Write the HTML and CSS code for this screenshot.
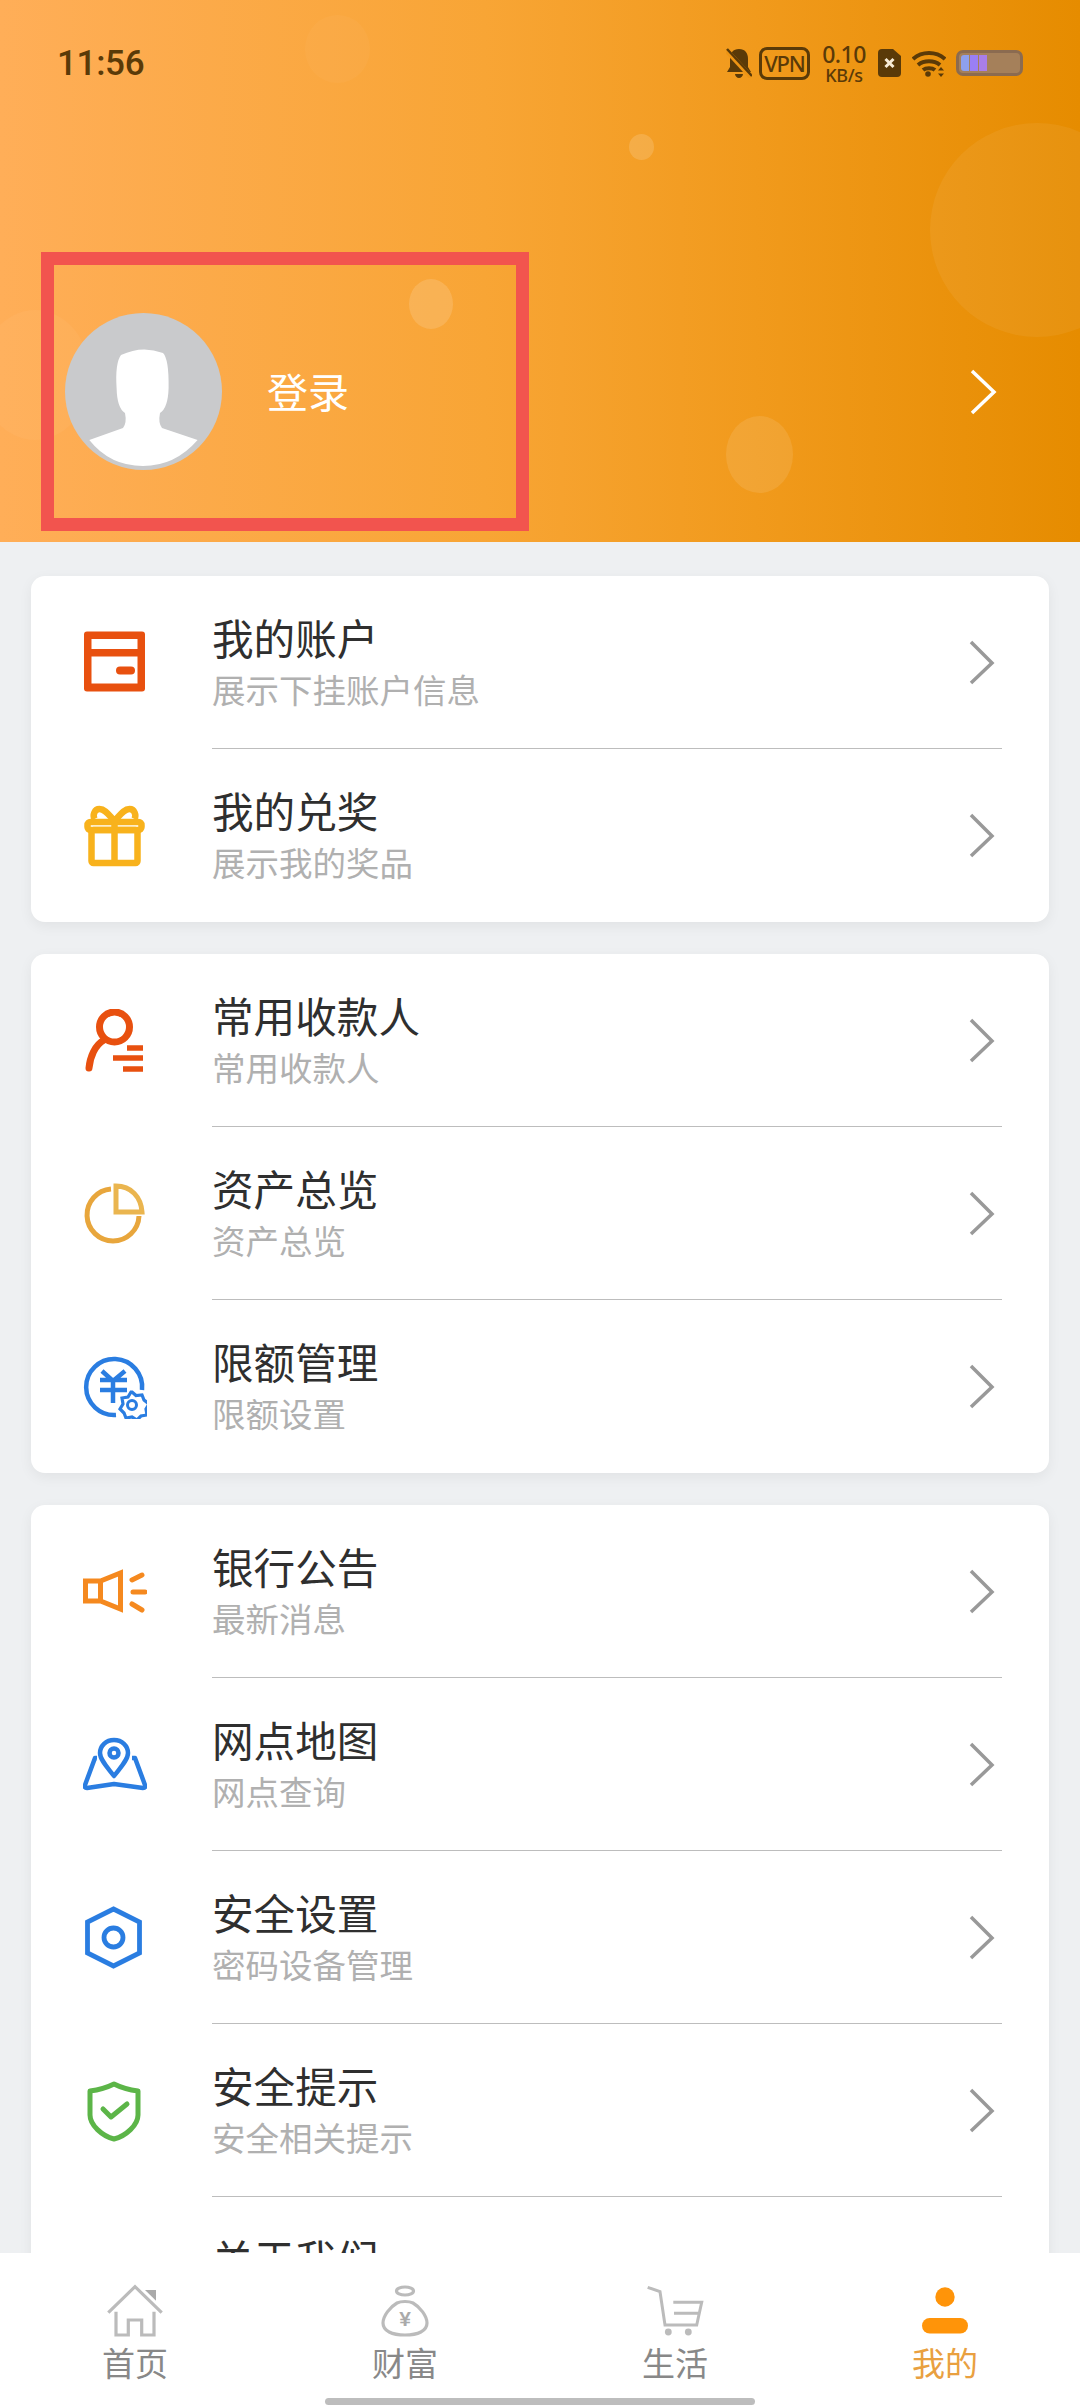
FILE: index.html
```html
<!DOCTYPE html>
<html lang="zh-CN">
<head>
<meta charset="utf-8">
<title>我的</title>
<link rel="stylesheet" href="styles.css">
</head>
<body>
<div class="app">
  <header class="hero">
    <span class="bubble b1"></span><span class="bubble b2"></span><span class="bubble b3"></span>
    <span class="bubble b4"></span><span class="bubble b5"></span><span class="bubble b6"></span>
    <div class="status">
      <span class="time">11:56</span>
      <div class="status-icons">
        <svg class="s-bell" viewBox="0 0 26 30"><path d="M13 1c6 0 9 4 9 10v8l3 5H1l3-5v-8C4 5 7 1 13 1zM9 26h8c0 2-2 4-4 4s-4-2-4-4z" fill="#5a3a08"/><path d="M1 3l24 26" stroke="#ee9514" stroke-width="5"/><path d="M1 1l25 27" stroke="#5a3a08" stroke-width="2.5"/></svg>
        <span class="vpn">VPN</span>
        <span class="speed"><b>0.10</b><i>KB/s</i></span>
        <svg class="s-sim" viewBox="0 0 23 28"><path d="M4 0h11l8 7v17a4 4 0 0 1-4 4H4a4 4 0 0 1-4-4V4a4 4 0 0 1 4-4z" fill="#5a3a08"/><path d="M7.500 10l8 8M15.500 10l-8 8" stroke="#f8ecd6" stroke-width="3"/></svg>
        <svg class="s-wifi" viewBox="0 0 34 27" fill="none" stroke="#5a3a08" stroke-width="4"><path d="M1 9c9-8 23-8 32 0M6 15c6-5 16-5 22 0M11 20c3-2.500 9-2.500 12 0"/><circle cx="16" cy="24" r="2.800" fill="#5a3a08" stroke="none"/><path d="M29 17l3 3.500h-6zM29 27l3-3.500h-6z" fill="#5a3a08" stroke="none"/></svg>
        <span class="battery"><i class="cell c1"></i><i class="cell c2"></i><i class="cell c3"></i></span>
      </div>
    </div>
    <div class="profile">
      <svg class="avatar" viewBox="0 0 157 157"><circle cx="78.500" cy="78.500" r="78.500" fill="#c9cacc"/><path d="M24.300 127L58 115Q62 110 60 100Q52 95 51.600 75Q50 50 56 42Q77 32 98 40Q104 46 103.600 75Q103 95 95 100Q93 110 97 115L132.600 127Q110 153 78 153Q45 153 24.300 127Z" fill="#fff"/></svg>
      <span class="login">登录</span>
      <svg class="hero-chev" viewBox="0 0 27 46"><path d="M2 2l22 21L2 44" fill="none" stroke="#fff" stroke-width="3.500"/></svg>
    </div>
    <div class="mark"></div>
  </header>

  <main class="content">
    <section class="card">
      <a class="row">
        <svg class="ico" viewBox="83 630 64 64"><rect x="84" y="630.500" width="61" height="60" rx="3" fill="#e8500f"/><rect x="91.500" y="638" width="46" height="10" fill="#fff"/><rect x="91.500" y="655.500" width="46" height="27" fill="#fff"/><rect x="116" y="665.500" width="19" height="8" rx="4" fill="#e8500f"/></svg>
        <div class="txt"><h3>我的账户</h3><p>展示下挂账户信息</p></div>
        <svg class="chev" viewBox="0 0 26 46"><path d="M2 2l21 21L2 43" fill="none" stroke="#999" stroke-width="3.500"/></svg>
      </a>
      <a class="row">
        <svg class="ico" viewBox="83 803 64 64" fill="none" stroke="#f8b21c" stroke-width="6.500" stroke-linejoin="round"><rect x="87.500" y="821" width="54" height="8" rx="3"/><rect x="91.500" y="829" width="46" height="33" rx="2"/><path d="M114.500 820v42M114.500 820c-5-5-9-12-15-12-5 0-7 6-5 10M114.500 820c5-5 9-12 15-12 5 0 7 6 5 10"/></svg>
        <div class="txt"><h3>我的兑奖</h3><p>展示我的奖品</p></div>
        <svg class="chev" viewBox="0 0 26 46"><path d="M2 2l21 21L2 43" fill="none" stroke="#999" stroke-width="3.500"/></svg>
      </a>
    </section>

    <section class="card">
      <a class="row">
        <svg class="ico" viewBox="83 1008 64 64" fill="none" stroke="#e8500f" stroke-width="7" stroke-linecap="round"><circle cx="114.500" cy="1026" r="15"/><path d="M104 1039c-9 5-14 17-15 28"/><path d="M127 1047h16M113 1057h30M123 1068h20" stroke-linecap="butt" stroke-width="5.500"/></svg>
        <div class="txt"><h3>常用收款人</h3><p>常用收款人</p></div>
        <svg class="chev" viewBox="0 0 26 46"><path d="M2 2l21 21L2 43" fill="none" stroke="#999" stroke-width="3.500"/></svg>
      </a>
      <a class="row">
        <svg class="ico" viewBox="83 1181 64 64" fill="none" stroke="#e8a63c" stroke-width="5"><path d="M111 1188a26 26 0 1 0 28 27"/><path d="M116 1185c15 0 25 11 26 26h-26z" stroke="#eab54f"/></svg>
        <div class="txt"><h3>资产总览</h3><p>资产总览</p></div>
        <svg class="chev" viewBox="0 0 26 46"><path d="M2 2l21 21L2 43" fill="none" stroke="#999" stroke-width="3.500"/></svg>
      </a>
      <a class="row">
        <svg class="ico" viewBox="83 1353 64 64" fill="none" stroke="#2a7de1" stroke-width="4.500"><path d="M116 1413a28 28 0 1 1 26-25"/><path d="M102 1369l11 10 12-10M100 1378h27M100 1388h27M113 1378v23"/><path d="M132 1390l4 3.500 6-.5 2 5 5 4-3 5 1 6-6 1-4 4-5-3-6 1-2-5-4-4 3-5-1-6 6-1 3-5z" fill="#fff" stroke-width="3.200"/><circle cx="132" cy="1403" r="4.500" stroke-width="3"/></svg>
        <div class="txt"><h3>限额管理</h3><p>限额设置</p></div>
        <svg class="chev" viewBox="0 0 26 46"><path d="M2 2l21 21L2 43" fill="none" stroke="#999" stroke-width="3.500"/></svg>
      </a>
    </section>

    <section class="card">
      <a class="row">
        <svg class="ico" viewBox="83 1559 64 64" fill="none" stroke="#f5891f" stroke-width="5"><path d="M85.500 1580h15l20-8v36l-20-8h-15zM100.500 1580v20"/><path d="M132 1579l10-5M133 1591h12M132 1603l10 6" stroke-linecap="round"/></svg>
        <div class="txt"><h3>银行公告</h3><p>最新消息</p></div>
        <svg class="chev" viewBox="0 0 26 46"><path d="M2 2l21 21L2 43" fill="none" stroke="#999" stroke-width="3.500"/></svg>
      </a>
      <a class="row">
        <svg class="ico" viewBox="83 1732 64 64" fill="none" stroke="#2a7de1" stroke-width="4.500" stroke-linejoin="round"><path d="M114 1739c-8 0-14 6-14 13 0 7 8 15 14 23 6-8 14-16 14-23 0-7-6-13-14-13z"/><circle cx="114" cy="1752" r="4.500"/><path d="M97 1757h-2l-10 27c-1 2 0 3 2 3l27-4 29 4c2 0 3-1 2-3l-10-27h-3"/></svg>
        <div class="txt"><h3>网点地图</h3><p>网点查询</p></div>
        <svg class="chev" viewBox="0 0 26 46"><path d="M2 2l21 21L2 43" fill="none" stroke="#999" stroke-width="3.500"/></svg>
      </a>
      <a class="row">
        <svg class="ico" viewBox="83 1905 64 64" fill="none" stroke="#2a7de1" stroke-width="4.800"><path d="M113.500 1908l26 13v31l-26 13-26-13v-31z"/><circle cx="113.500" cy="1936.500" r="9.500"/></svg>
        <div class="txt"><h3>安全设置</h3><p>密码设备管理</p></div>
        <svg class="chev" viewBox="0 0 26 46"><path d="M2 2l21 21L2 43" fill="none" stroke="#999" stroke-width="3.500"/></svg>
      </a>
      <a class="row">
        <svg class="ico" viewBox="83 2078 64 64" fill="none" stroke="#5cb548" stroke-width="5" stroke-linecap="round" stroke-linejoin="round"><path d="M114 2083c-8 4-16 6-24 7v24c0 10 12 21 24 24 12-3 24-14 24-24v-24c-8-1-16-3-24-7z"/><path d="M103 2108l8 8 16-13"/></svg>
        <div class="txt"><h3>安全提示</h3><p>安全相关提示</p></div>
        <svg class="chev" viewBox="0 0 26 46"><path d="M2 2l21 21L2 43" fill="none" stroke="#999" stroke-width="3.500"/></svg>
      </a>
      <a class="row">
        <svg class="ico" viewBox="0 0 64 64" fill="none" stroke="#e8a63c" stroke-width="5"><circle cx="32" cy="32" r="28"/></svg>
        <div class="txt"><h3>关于我们</h3><p>关于我们</p></div>
        <svg class="chev" viewBox="0 0 26 46"><path d="M2 2l21 21L2 43" fill="none" stroke="#999" stroke-width="3.500"/></svg>
      </a>
    </section>
  </main>

  <nav class="tabbar">
    <a class="tab">
      <svg class="tab-ico" viewBox="0 0 60 58" fill="none" stroke="#bbb" stroke-width="3.200"><path d="M3.300 30.700L30 4.700l26.700 26"/><path d="M40 8h11v10.700z" fill="#aaa" stroke="none"/><path d="M11 29.700V53h12.300V38h13.400v15H49V29.700"/></svg>
      <span>首页</span>
    </a>
    <a class="tab">
      <svg class="tab-ico" viewBox="0 0 60 58" fill="none" stroke="#bbb" stroke-width="3.200"><ellipse cx="30" cy="9" rx="8.500" ry="4"/><path d="M22 21c4-2 12-2 16 0 7 4 14 13 14 20 0 8-9 12-22 12S8 49 8 41c0-7 7-16 14-20z"/><text class="yen" x="30" y="44" text-anchor="middle">¥</text></svg>
      <span>财富</span>
    </a>
    <a class="tab">
      <svg class="tab-ico" viewBox="0 0 60 58" fill="none" stroke="#bbb" stroke-width="3"><path d="M2.700 5.300L15 9.700 20 43h31.700l5-22.700H28.300M29 31.300h24"/><circle cx="23.300" cy="50" r="3.400" fill="#bbb" stroke="none"/><circle cx="43.300" cy="50" r="3.400" fill="#bbb" stroke="none"/></svg>
      <span>生活</span>
    </a>
    <a class="tab active">
      <svg class="tab-ico" viewBox="0 0 60 58"><circle cx="30" cy="15" r="9.700" fill="#ff9409"/><rect x="7" y="36" width="46" height="15.500" rx="7.700" fill="#ff9409"/></svg>
      <span>我的</span>
    </a>
    <div class="home-bar"></div>
  </nav>
</div>
</body>
</html>
```
FILE: styles.css
```css
* { box-sizing: border-box; }
html, body { margin: 0; padding: 0; }
body { width: 1080px; height: 2408px; overflow: hidden; background: #eef0f2; font-family: "Noto Sans CJK SC", "Noto Sans", sans-serif; }
.app { position: relative; width: 1080px; height: 2408px; overflow: hidden; }

.hero { position: relative; height: 542px; overflow: hidden; background: linear-gradient(90deg, #ffae58 0%, #f8a535 45%, #f19a1c 70%, #e68c00 100%); }
.bubble { position: absolute; border-radius: 50%; background: rgba(255, 255, 255, .1); }
.b1 { left: 305px; top: 15px; width: 65px; height: 68px; background: rgba(255, 255, 255, .03); }
.b2 { left: 629px; top: 134px; width: 25px; height: 26px; background: rgba(255, 255, 255, .15); }
.b3 { left: 930px; top: 123px; width: 214px; height: 214px; background: rgba(255, 255, 255, .06); }
.b4 { left: 409px; top: 279px; width: 44px; height: 50px; background: rgba(255, 255, 255, .14); }
.b5 { left: 726px; top: 416px; width: 67px; height: 77px; background: rgba(255, 255, 255, .1); }
.b6 { left: -20px; top: 310px; width: 110px; height: 130px; background: rgba(255, 255, 255, .04); }

.status { position: relative; height: 126px; padding: 0 57px; display: flex; align-items: center; justify-content: space-between; color: #5a3a08; }
.time { font-family: Roboto, sans-serif; font-size: 35px; font-weight: 500; letter-spacing: -.3px; }
.status-icons { display: flex; align-items: center; }
.s-bell { width: 26px; height: 30px; }
.vpn { width: 51px; height: 33px; margin-left: 7px; border: 3px solid #5a3a08; border-radius: 8px; font: 500 22px/27px "Noto Sans", sans-serif; text-align: center; letter-spacing: -1.2px; }
.speed { display: flex; flex-direction: column; align-items: center; width: 46px; margin-left: 11px; font-family: "Noto Sans", sans-serif; }
.speed b { font-size: 23px; font-weight: 500; line-height: 23px; letter-spacing: -.5px; }
.speed i { font-size: 18px; font-style: normal; font-weight: 500; line-height: 18px; letter-spacing: -.3px; }
.s-sim { width: 23px; height: 28px; margin-left: 11px; }
.s-wifi { width: 34px; height: 27px; margin-left: 11px; }
.battery { display: flex; gap: 1px; width: 67px; height: 26px; margin-left: 10px; padding: 2px; border: 3px solid #8b6b50; border-radius: 7px; background: #a5805a; }
.cell { display: block; height: 100%; width: 8px; }
.c1 { background: #8ea0ee; border-radius: 3px 0 0 3px; }
.c2 { background: #9a7ff5; }
.c3 { background: #a97ee8; }

.profile { position: relative; margin-top: 187px; height: 157px; padding: 0 83px 0 65px; display: flex; align-items: center; }
.avatar { width: 157px; height: 157px; flex: none; }
.login { margin-left: 45px; flex: 1; font-size: 41px; color: #fff; line-height: 50px; padding-bottom: 3px; }
.hero-chev { width: 27px; height: 46px; flex: none; }
.mark { position: absolute; left: 41px; top: 252px; width: 488px; height: 279px; border: 13.5px solid #f2544e; }

.content { padding: 34px 31px 0; display: flex; flex-direction: column; gap: 32px; }
.card { background: #fff; border-radius: 14px; box-shadow: 0 4px 14px rgba(0, 0, 0, .06); }
.row { height: 173px; margin-left: 52px; display: flex; align-items: center; }
.ico { width: 64px; height: 64px; flex: none; }
.txt { flex: 1; height: 100%; margin-left: 65px; padding-top: 35px; border-bottom: 1.5px solid #bdbdbd; }
.row:last-child .txt { border-bottom: none; }
.txt h3 { margin: 0; font-size: 41.6px; font-weight: 400; line-height: 52px; color: #2f2f2f; }
.txt p { margin: 0; font-size: 33.5px; line-height: 52px; color: #b0b0b0; }
.chev { width: 26px; height: 46px; flex: none; margin-left: -33px; margin-right: 54px; }

.tabbar { position: absolute; left: 0; right: 0; top: 2253px; height: 155px; display: grid; grid-template-columns: repeat(4, 270px); background: #fff; }
.tab { display: flex; flex-direction: column; align-items: center; padding-top: 29px; color: #888; font-size: 33px; line-height: 44px; }
.tab.active { color: #e9a040; }
.tab-ico { width: 60px; height: 58px; }
.yen { font: 700 21px "Liberation Sans", sans-serif; fill: #aaa; stroke: none; }
.home-bar { position: absolute; left: 325px; top: 145px; width: 430px; height: 7px; border-radius: 4px; background: #bdbdbd; }
```
